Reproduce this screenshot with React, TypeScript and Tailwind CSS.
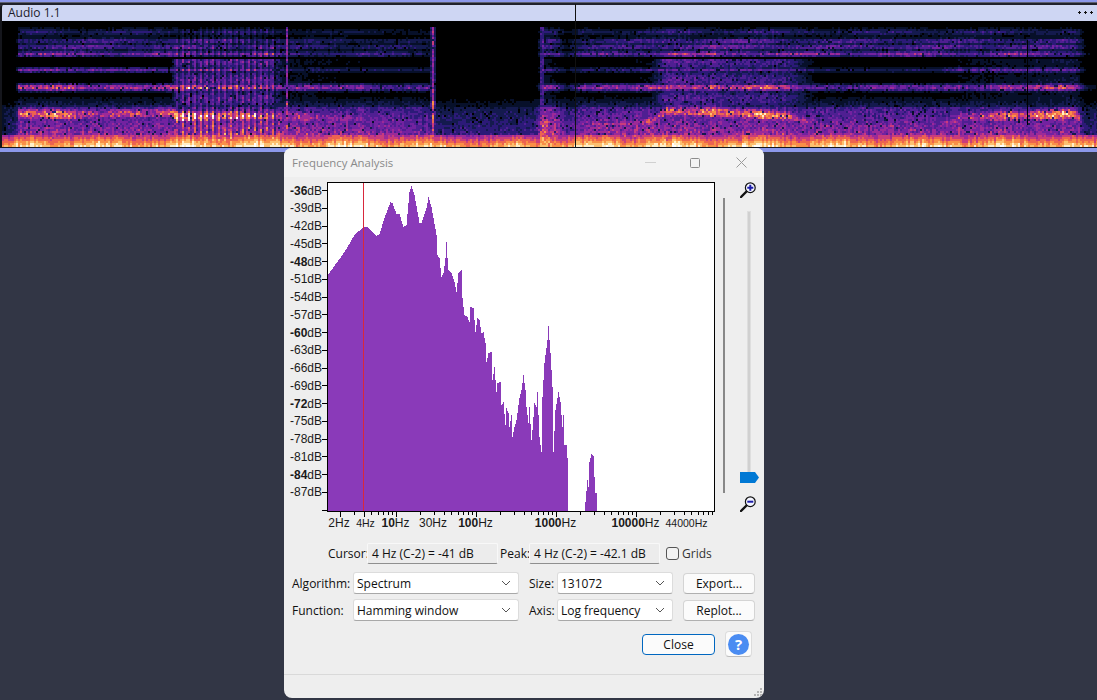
import { useMemo } from "react";

const rows: [number, number, number, number, number, number, number, number][] = [
  [0, 0, 0, 0, 0, 115, 0.2, 0],
  [15, 0, 0, 0, 0.05, 115, 0.28, 0],
  [18, 0.42, 0.5, 0.7, 0.82, 113, 0.55, 0.06],
  [170, 0.42, 0.42, 0.68, 0.76, 114, 0.55, 0.05],
  [176, 0.5, 0.5, 0.82, 1.0, 118, 0.68, 0.38],
  [270, 0.5, 0.5, 0.82, 1.0, 116, 0.68, 0.38],
  [283, 0.3, 0.25, 0.55, 0.66, 115, 0.58, 0.1],
  [400, 0.27, 0.22, 0.5, 0.4, 120, 0.52, 0.04],
  [428, 0.22, 0.2, 0.5, 0.35, 120, 0.48, 0.02],
  [436, 0, 0, 0, 0.05, 125, 0.3, 0],
  [535, 0, 0, 0, 0.05, 125, 0.32, 0],
  [541, 0.45, 0.35, 0.7, 0.9, 122, 0.78, 0.12],
  [556, 0.4, 0.3, 0.62, 0.66, 122, 0.66, 0.06],
  [565, 0.14, 0.12, 0.24, 0.22, 125, 0.4, 0.02],
  [580, 0.36, 0.25, 0.5, 0.5, 125, 0.56, 0.03],
  [650, 0.42, 0.32, 0.66, 0.66, 122, 0.6, 0.08],
  [665, 0.52, 0.46, 0.82, 0.95, 112, 0.58, 0.36],
  [790, 0.48, 0.4, 0.72, 0.82, 116, 0.58, 0.28],
  [815, 0.44, 0.22, 0.48, 0.58, 125, 0.55, 0.05],
  [940, 0.44, 0.22, 0.5, 0.5, 127, 0.55, 0.04],
  [960, 0.44, 0.4, 0.62, 0.8, 119, 0.55, 0.08],
  [1075, 0.44, 0.45, 0.72, 0.9, 113, 0.55, 0.14],
  [1085, 0.12, 0.1, 0.2, 0.25, 125, 0.3, 0.02],
  [1097, 0, 0, 0.1, 0.1, 125, 0.3, 0],
];

const levels: [number, string][] = [
  [0.09, "#07102a"],
  [0.16, "#141a4e"],
  [0.24, "#2c1a78"],
  [0.33, "#4f1f92"],
  [0.43, "#7322a0"],
  [0.53, "#9c2a98"],
  [0.63, "#c93c7c"],
  [0.73, "#ec6350"],
  [0.83, "#f98f48"],
  [0.93, "#fcc070"],
  [1.03, "#ffeec8"],
  [1.14, "#ffffff"],
];

function rng(seed: number) {
  return () => {
    seed |= 0;
    seed = (seed + 0x6d2b79f5) | 0;
    let t = Math.imul(seed ^ (seed >>> 15), 1 | seed);
    t = (t + Math.imul(t ^ (t >>> 7), 61 | t)) ^ t;
    return ((t ^ (t >>> 14)) >>> 0) / 4294967296;
  };
}

const g = (y: number, c: number, s: number) => Math.exp(-((y - c) * (y - c)) / (2 * s * s));

function params(x: number) {
  for (let i = 0; i < rows.length - 1; i++) {
    const a = rows[i];
    const b = rows[i + 1];
    if (x >= a[0] && x <= b[0]) {
      const t = (x - a[0]) / (b[0] - a[0] || 1);
      return a.map((v, k) => v + (b[k] - v) * t);
    }
  }
  return rows[rows.length - 1];
}

function Spectrogram() {
  const paths = useMemo(() => {
    const r = rng(11);
    const out: string[][] = levels.map(() => []);
    for (let x = 0; x < 1097; x += 2) {
      const [, hi, b70, b87, form, formY, low, mist] = params(x);
      let colGain = 0.9 + r() * 0.2;
      const striped = x > 176 && x < 275;
      if (striped) colGain = 0.84 + 0.3 * Math.sin((x * 2 * Math.PI) / 6) + r() * 0.1;
      const slow = 0.92 + 0.1 * Math.sin(x / 23) + 0.08 * Math.sin(x / 9.3 + 1);
      const spike = 0.58 * g(x, 286, 1) + 0.6 * g(x, 432, 1.5) + 0.4 * g(x, 541, 1.6);
      const wavy = Math.sin(x / 41) * 1.2;
      const bottomGain = 0.9 + r() * 0.22;
      for (let y = 21; y < 147; y += 2) {
        const cy = y + 1;
        let v = 0;
        const band =
          g(cy, 54, 1.6) + 0.8 * g(cy, 47, 1.6) + 0.7 * g(cy, 41, 1.6) + 0.45 * g(cy, 32, 2) +
          (cy > 27 && cy < 58 ? 0.4 : 0) * Math.max(0.35, 1 - (58 - cy) / 60);
        v = Math.max(v, hi * band * (0.82 + 0.14 * Math.sin(x / 17 + cy / 5)));
        v = Math.max(v, b70 * g(cy, 70, 1.9));
        if (cy > 60 && cy < 82 && striped) v = Math.max(v, 0.27);
        v = Math.max(v, b87 * slow * g(cy, 87.5, 2.6));
        if (cy > 58 && cy < 107) v = Math.max(v, mist * (0.95 + 0.2 * Math.sin(cy / 3)));
        if (cy > 92 && cy < 110) v = Math.max(v, low * 0.42 * ((cy - 92) / 18) + 0.02);
        v = Math.max(v, form * slow * g(cy, formY + wavy, 5));
        if (cy > 106) v = Math.max(v, low * Math.min(1.1, 0.6 + ((cy - 106) / 32) * 0.45));
        if (cy > 27) v = Math.max(v, spike * (cy > 100 ? 1.2 : 0.9));
        const noise = r() < 0.05 ? 0.35 : 0.74 + r() * 0.46;
        let val = v * noise * colGain;
        if (cy >= 135) {
          const base = 0.46 + ((cy - 135) / 12) * 0.42 + low * 0.33;
          val = Math.max(val, base * bottomGain * (0.94 + r() * 0.1) * (0.96 + 0.08 * Math.sin(x / 13)));
        }
        let idx = -1;
        for (let k = levels.length - 1; k >= 0; k--) {
          if (val >= levels[k][0]) {
            idx = k;
            break;
          }
        }
        if (idx >= 0) out[idx].push(`M${x} ${y}h2v2h-2z`);
      }
    }
    return out.map((p) => p.join(""));
  }, []);
  return (
    <svg width="1097" height="126" viewBox="0 21 1097 126" shapeRendering="crispEdges" className="block bg-black">
      {paths.map((d, i) => (
        <path key={i} d={d} fill={levels[i][1]} />
      ))}
      <rect x="1027" y="40" width="1" height="85" fill="#000" />
      <rect x="0" y="21" width="2" height="126" fill="#15161c" />
    </svg>
  );
}

const contour: [number, number][] = [
  [328, 274], [344, 252], [354, 235], [363, 227], [367, 227], [376, 236], [379, 234], [384, 218], [390, 202], [392, 203],
  [396, 214], [399, 214], [403, 227], [406, 225], [409, 192], [411, 186], [414, 195], [419, 223], [421, 223], [426, 208],
  [428, 197], [431, 207], [436, 235], [437, 255], [439, 258], [441, 277], [443, 273], [445, 258], [446, 242], [447, 258],
  [448, 270], [451, 273], [454, 282], [456, 292], [458, 273], [461, 270], [462, 298], [464, 315], [467, 317], [469, 322],
  [470, 307], [473, 308], [475, 332], [477, 318], [479, 320], [481, 333], [483, 332], [485, 343], [486, 362], [488, 353],
  [491, 352], [492, 380], [494, 367], [496, 392], [497, 383], [500, 382], [501, 405], [503, 402], [505, 425], [506, 408],
  [508, 413], [509, 427], [511, 415], [512, 437], [514, 427], [516, 420], [519, 398], [521, 390], [523, 375], [525, 390],
  [526, 407], [528, 423], [529, 407], [531, 440], [532, 430], [534, 403], [536, 407], [537, 392], [539, 437], [541, 452],
  [542, 397], [544, 363], [547, 340], [548, 326], [550, 353], [552, 387], [553, 452], [555, 410], [558, 392], [560, 402],
  [562, 427], [563, 415], [564, 445], [566, 445], [567, 458], [568, 511],
];
const contour2: [number, number][] = [
  [584, 511], [585, 502], [587, 480], [588, 487], [589, 462], [591, 454], [593, 456], [594, 477], [595, 493], [596, 493], [597, 511],
];

function stepPath(pts: [number, number][]) {
  let d = `M${pts[0][0]} 511`;
  for (let i = 0; i < pts.length - 1; i++) {
    const [ax, ay] = pts[i];
    const [bx, by] = pts[i + 1];
    for (let x = ax; x < bx; x++) {
      const y = Math.round(ay + ((by - ay) * (x - ax)) / (bx - ax));
      d += `L${x} ${y}L${x + 1} ${y}`;
    }
  }
  d += `L${pts[pts.length - 1][0]} 511Z`;
  return d;
}

const dbLabels = ["-36", "-39", "-42", "-45", "-48", "-51", "-54", "-57", "-60", "-63", "-66", "-69", "-72", "-75", "-78", "-81", "-84", "-87"];
const boldDb = ["-36", "-48", "-60", "-72", "-84"];
const fx = (f: number) => 395.5 + 80 * Math.log10(f / 10);

function Plot() {
  const ticks: number[] = [];
  for (let d = 1; d <= 10000; d *= 10) for (let m = 1; m < 10; m++) ticks.push(d * m);
  const labels: [string, string, number, number, boolean][] = [
    ["", "2Hz", 339, 12, false],
    ["", "4Hz", 365.5, 10.5, false],
    ["10", "Hz", 395.5, 12, true],
    ["", "30Hz", 433, 12, false],
    ["100", "Hz", 475.5, 12, true],
    ["1000", "Hz", 555.5, 12, true],
    ["10000", "Hz", 635.5, 12, true],
    ["", "44000Hz", 686.5, 10.5, false],
  ];
  return (
    <svg width="436" height="358" viewBox="284 177 436 358" className="block shrink-0">
      <rect x="327.5" y="182.5" width="387" height="329" fill="#fff" />
      <g shapeRendering="crispEdges">
        <path d={stepPath(contour)} fill="#8a3ab9" />
        <path d={stepPath(contour2)} fill="#8a3ab9" />
        <rect x="363" y="183" width="1" height="328" fill="#d8283c" />
        <rect x="327.5" y="182.5" width="387" height="329" fill="none" stroke="#000" strokeWidth="1" />
        {dbLabels.map((_, i) => (
          <rect key={i} x="322" y={Math.round(190 + i * 17.75)} width="5" height="1" fill="#000" />
        ))}
        <rect x="322" y="510" width="5" height="1" fill="#000" />
        {ticks.map((f) => {
          const x = fx(f);
          if (x < 328 || x > 715) return null;
          const major = f === 10 || f === 100 || f === 1000 || f === 10000 || f === 2 || f === 4;
          return <rect key={f} x={Math.round(x)} y="512" width="1" height={major ? 5 : 3} fill="#000" />;
        })}
      </g>
      {dbLabels.map((l, i) => (
        <text key={l} x="322" y={194.5 + i * 17.75} textAnchor="end" fontSize="12" fill="#1a1a1a">
          <tspan fontWeight={boldDb.includes(l) ? 700 : 400}>{l}</tspan>dB
        </text>
      ))}
      {labels.map(([b, r, x, size, bold]) => (
        <text key={r + x} x={x} y="527" textAnchor="middle" fontSize={size} fill="#1a1a1a">
          {bold ? <tspan fontWeight={700}>{b}</tspan> : null}
          {r}
        </text>
      ))}
    </svg>
  );
}

function Magnifier({ plus }: { plus: boolean }) {
  return (
    <svg width="16" height="16" viewBox="0 0 16 16" className="block ml-[14px]">
      <path d="M1 15 L7 9" stroke="#111" strokeWidth="2.4" strokeLinecap="round" />
      <circle cx="10.3" cy="5.7" r="4.9" fill="#f4f6ff" stroke="#111" strokeWidth="1.2" />
      <path d="M7.3 5.7h6" stroke="#1c1ca8" strokeWidth="2" />
      {plus ? <path d="M10.3 2.7v6" stroke="#1c1ca8" strokeWidth="2" /> : null}
    </svg>
  );
}

function Select({ value, w }: { value: string; w: string }) {
  return (
    <div className={`${w} h-[22px] shrink-0 bg-white border border-[#dcdcdc] border-b-[#a8a8a8] rounded-[3px] flex items-center justify-between pl-[3px] pr-[7px] text-[#101010]`}>
      <span className="pt-[2px]">{value}</span>
      <svg width="10" height="6" viewBox="0 0 10 6" className="block">
        <path d="M1 1l4 4 4-4" fill="none" stroke="#555" strokeWidth="1" />
      </svg>
    </div>
  );
}

function Readout({ text }: { text: string }) {
  return (
    <div className="w-[131px] h-[21px] shrink-0 bg-[#ececec] border border-[#f8f8f8] border-b-[#8f8f8f] rounded-[2px] flex items-center pl-[4px] text-[#101010]">
      {text}
    </div>
  );
}

function Button({ label, w, cls }: { label: string; w: string; cls: string }) {
  return (
    <div className={`${w} ${cls} rounded-[4px] bg-[#fbfbfb] flex items-center justify-center text-[#101010]`}>
      <span className="pt-[2px]">{label}</span>
    </div>
  );
}

export default function App() {
  return (
    <div className="relative w-[1097px] h-[700px] overflow-hidden bg-[#323645] font-['Liberation_Sans',sans-serif]">
      <div className="h-[2px] bg-[#8c98ea]" />
      <div className="h-[1px] bg-[#5c5f70]" />
      <div className="h-[1px] bg-[#20222c]" />
      <div className="h-[1px] bg-[#20222c]" />
      <div className="h-[16px] bg-[#ced6f3] border-l-2 border-[#15161c] rounded-tl-[3px] flex items-center justify-between pl-[6px] pr-[3px] text-[12px] text-[#1c1c2a] font-['Open_Sans',sans-serif]">
        <span>Audio 1.1</span>
        <svg width="16" height="5" viewBox="0 0 16 5" className="block" shapeRendering="crispEdges">
          <path d="M1 0h1v1h1v1h-1v1h-1v-1h-1v-1h1zM7 0h1v1h1v1h-1v1h-1v-1h-1v-1h1zM13 0h1v1h1v1h-1v1h-1v-1h-1v-1h1z" fill="#111" />
        </svg>
      </div>
      <Spectrogram />
      <div className="h-[1px] bg-[#15161c]" />
      <div className="h-[4px] bg-[#8c98ea]" />
      <div className="absolute left-[575px] top-[4px] w-[1px] h-[143px] bg-[#111]" />

      <div className="absolute left-[284px] top-[148px] w-[480px] h-[550px] rounded-[8px] overflow-hidden bg-[#eeeeee] flex flex-col text-[12px] font-['Open_Sans',sans-serif]">
        <div className="h-[29px] shrink-0 bg-[#f3f3f3] flex items-center pl-[8px] text-[#8a8a8a]">
          <span className="flex-1 text-[11.4px]">Frequency Analysis</span>
          <svg width="11" height="1" className="block mr-[34px]">
            <rect width="11" height="1" fill="#d0d0d0" />
          </svg>
          <svg width="10" height="10" viewBox="0 0 10 10" className="block mr-[36px]">
            <rect x="0.5" y="0.5" width="9" height="9" rx="1" fill="none" stroke="#8c8c8c" />
          </svg>
          <svg width="11" height="11" viewBox="0 0 11 11" className="block mr-[17px]">
            <path d="M0.5 0.5l10 10M10.5 0.5l-10 10" stroke="#9a9a9a" fill="none" />
          </svg>
        </div>

        <div className="flex h-[358px] shrink-0 font-['Liberation_Sans',sans-serif]">
          <Plot />
          <div className="w-[2px] h-[295px] mt-[21px] ml-[3px] bg-[#888888] shrink-0" />
          <div className="flex flex-col items-start ml-px">
            <div className="mt-[5px]">
              <Magnifier plus />
            </div>
            <div className="w-[4px] h-[262px] mt-[13px] ml-[21px] bg-[#d0d0d0] border border-[#dedede]" />
            <svg width="19" height="11" viewBox="0 0 19 11" className="block ml-[14px] -mt-[1px]">
              <path d="M0 0H15L19 5.5L15 11H0Z" fill="#0078d4" />
            </svg>
            <div className="mt-[13px]">
              <Magnifier plus={false} />
            </div>
          </div>
        </div>

        <div className="flex items-center h-[21px] mt-[8px] pl-[44px] shrink-0 text-[#101010]">
          <span className="w-[39px] shrink-0">Cursor:</span>
          <Readout text="4 Hz (C-2) = -41 dB" />
          <span className="w-[31px] shrink-0 pl-[2px]">Peak:</span>
          <Readout text="4 Hz (C-2) = -42.1 dB" />
          <span className="w-[13px] h-[13px] ml-[6px] shrink-0 rounded-[3px] border border-[#555] bg-[#f2f2f2]" />
          <span className="ml-[3px] text-[#333]">Grids</span>
        </div>

        <div className="flex items-center h-[22px] mt-[8px] pl-[8px] shrink-0 text-[#101010]">
          <span className="w-[61px] shrink-0 pt-[2px]">Algorithm:</span>
          <Select value="Spectrum" w="w-[166px]" />
          <span className="w-[38px] shrink-0 pl-[10px] pt-[2px]">Size:</span>
          <Select value="131072" w="w-[116px]" />
          <Button label="Export..." w="w-[72px]" cls="h-[21px] ml-[10px] border border-[#d4d4d4] border-b-[#b0b0b0]" />
        </div>

        <div className="flex items-center h-[22px] mt-[5px] pl-[8px] shrink-0 text-[#101010]">
          <span className="w-[61px] shrink-0 pt-[2px]">Function:</span>
          <Select value="Hamming window" w="w-[166px]" />
          <span className="w-[38px] shrink-0 pl-[10px] pt-[2px]">Axis:</span>
          <Select value="Log frequency" w="w-[116px]" />
          <Button label="Replot..." w="w-[72px]" cls="h-[21px] ml-[10px] border border-[#d4d4d4] border-b-[#b0b0b0]" />
        </div>

        <div className="flex items-center justify-end h-[26px] mt-[10px] pr-[12px] shrink-0">
          <Button label="Close" w="w-[73px]" cls="h-[21px] border border-[#0067c0]" />
          <div className="w-[27px] h-[26px] ml-[10px] rounded-[4px] bg-[#fbfbfb] border border-[#dcdcdc] border-b-[#bdbdbd] flex items-center justify-center">
            <div className="w-[21px] h-[21px] rounded-full bg-[#4a8cf2] flex items-center justify-center text-white font-bold text-[15px] leading-none">?</div>
          </div>
        </div>

        <div className="h-[1px] mt-[17px] bg-[#d9d9d9] shrink-0" />
        <div className="flex-1 flex items-end justify-end pr-[2px] pb-[2px]">
          <svg width="8" height="8" viewBox="0 0 8 8" className="block" shapeRendering="crispEdges">
            <path d="M6 0h2v2h-2zM3 3h2v2h-2zM6 3h2v2h-2zM0 6h2v2h-2zM3 6h2v2h-2zM6 6h2v2h-2z" fill="#b4b4b4" />
          </svg>
        </div>
      </div>
    </div>
  );
}
